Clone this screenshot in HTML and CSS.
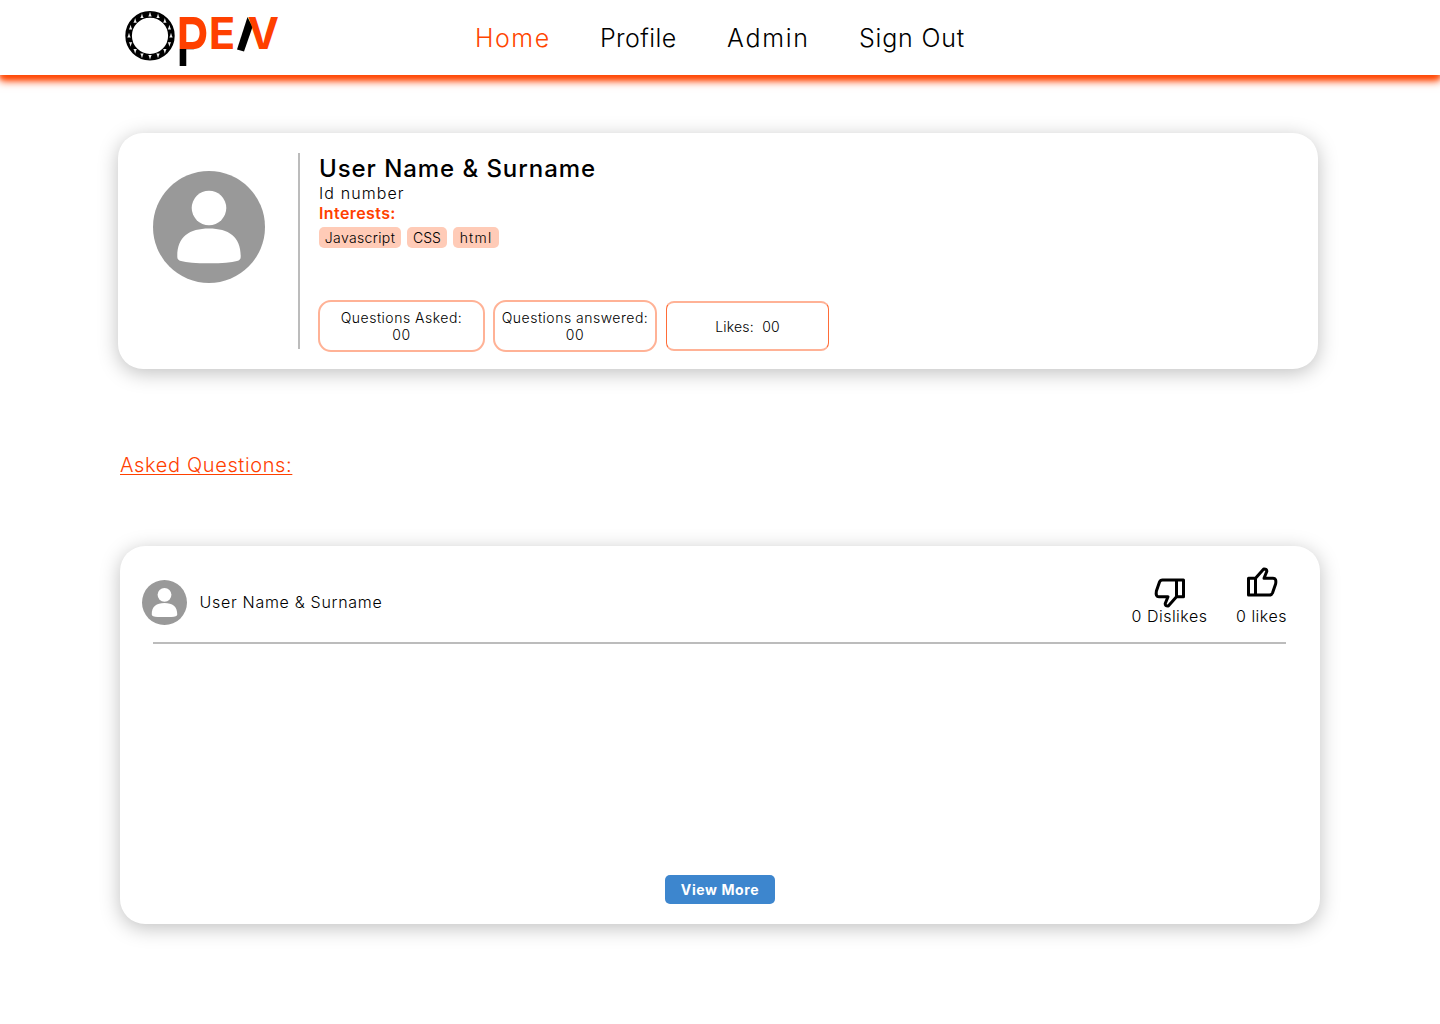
FILE: index.html
```html
<!DOCTYPE html>
<html lang="en">
<head>
<meta charset="utf-8">
<title>Open</title>
<link rel="stylesheet" href="styles.css">
</head>
<body>
<svg class="defs" aria-hidden="true">
  <symbol id="avatar" viewBox="0 0 112 112">
    <circle cx="56" cy="56" r="56" fill="#999"/>
    <circle cx="56" cy="37" r="17.3" fill="#fff"/>
    <path d="M24.3 86C24 66 36 57.5 56 57.5S88 66 87.7 86Q87.700 89 84 90Q76 92.300 56 92.300T28 90Q24.300 89 24.300 86Z" fill="#fff"/>
  </symbol>
</svg>
<header class="header">
  <svg class="logo" width="160" height="60" viewBox="120 8 160 60">
    <linearGradient id="p-fill" gradientUnits="userSpaceOnUse" x1="0" y1="8" x2="0" y2="68">
      <stop offset=".688" stop-color="#ff4000"/><stop offset=".688" stop-color="#000"/>
    </linearGradient>
    <circle cx="150" cy="35.800" r="21.400" fill="none" stroke="#000" stroke-width="6.600"/>
    <g id="ticks"></g>
    <text class="logo-p" x="176" y="65.500" textLength="32.500" lengthAdjust="spacingAndGlyphs">P</text>
    <text class="logo-type" x="208.800" y="49" textLength="26.500" lengthAdjust="spacingAndGlyphs">E</text>
    <path d="M247.500 17L252.500 27L244 51.500L237 49.500Z"/>
    <text class="logo-type" x="247.500" y="49" textLength="31.500" lengthAdjust="spacingAndGlyphs">V</text>
  </svg>
  <nav class="nav">
    <a class="nav-home">Home</a><a class="nav-profile">Profile</a><a class="nav-admin">Admin</a><a class="nav-out">Sign Out</a>
  </nav>
</header>
<main class="main">
  <section class="card profile">
    <svg class="avatar-lg"><use href="#avatar"/></svg>
    <div class="details">
      <h1 class="name">User Name &amp; Surname</h1>
      <p class="id">Id number</p>
      <p class="interests">Interests:</p>
      <div class="tags"><span class="tag tag-js">Javascript</span><span class="tag tag-css">CSS</span><span class="tag tag-html">html</span></div>
      <div class="stats">
        <div class="stat asked"><span>Questions Asked:</span><span>00</span></div>
        <div class="stat answered"><span>Questions answered:</span><span>00</span></div>
        <div class="stat likes"><span>Likes:&nbsp; 00</span></div>
      </div>
    </div>
  </section>
  <h2 class="heading">Asked Questions:</h2>
  <section class="card question">
    <div class="question-head">
      <svg class="avatar-sm" viewBox="0 0 112 112"><use href="#avatar"/></svg>
      <span class="author">User Name &amp; Surname</span>
      <div class="vote dislike">
        <svg width="32" height="30" viewBox="0 0 32 30"><path d="M22.500 2H8.500Q6.300 2 5.500 4L2.400 13Q1.300 18.800 5 18.800H14L11.200 25.600Q11 28.200 14.300 28L22.500 18.800ZM22.500 2H29.500V18.800H22.500Z"/></svg>
        <span>0 Dislikes</span>
      </div>
      <div class="vote like">
        <svg width="32" height="30" viewBox="0 0 32 30"><path d="M9.500 28H23.500Q25.700 28 26.500 26L29.600 17Q30.700 11.200 27 11.200H18L20.800 4.400Q21 1.800 17.700 2L9.500 11.200ZM9.500 28H2.500V11.200H9.500Z"/></svg>
        <span>0 likes</span>
      </div>
    </div>
    <button class="more">View More</button>
  </section>
</main>
<script src="logo.js"></script>
</body>
</html>
```
FILE: logo.js
```js
// Places the small white wedges around the logo ring; the lower ones point down.
const group = document.getElementById("ticks");
const count = 16;
for (let i = 0; i < count; i++) {
  const a = (i / count) * Math.PI * 2;
  const x = 150 + 21 * Math.sin(a);
  const y = 35.8 - 21 * Math.cos(a);
  const dir = Math.cos(a) < -0.1 ? -1 : 1;
  const p = document.createElementNS("http://www.w3.org/2000/svg", "path");
  p.setAttribute("d", "M0-3L.9 0L1.7 1.7H-1.7L-.9 0Z");
  p.setAttribute("fill", "#eee");
  p.setAttribute("transform", `translate(${x} ${y}) scale(1 ${dir})`);
  group.appendChild(p);
}
```
FILE: styles.css
```css
* { box-sizing: border-box; }
body { margin: 0; min-height: 100vh; background: #fff; color: #000; font-family: Inter, "Open Sans", sans-serif; }
h1, h2, p { margin: 0; font-weight: 400; }
.defs { display: none; }
.header { height: 75px; display: flex; align-items: flex-start; padding: 8px 0 0 120px; background: #fff; box-shadow: 0 4px 4px rgba(255, 69, 0, .6), 0 6px 8px #ff4500; }
.logo { display: block; flex: none; overflow: visible; }
.logo-type { font-family: Inter, sans-serif; font-weight: 700; font-size: 44px; fill: #ff4000; }
.logo-p { font-family: Inter, sans-serif; font-weight: 600; font-size: 66.700px; fill: url(#p-fill); }
.nav { display: flex; margin-left: 195px; height: 59px; align-items: center; font-size: 25px; font-weight: 300; white-space: nowrap; }
.nav a { flex: none; }
.nav-home { width: 125px; color: #ff4500; letter-spacing: 1.500px; }
.nav-profile { width: 127px; letter-spacing: .4px; }
.nav-admin { width: 132px; letter-spacing: 1.700px; }
.nav-out { letter-spacing: .8px; }
.main { padding: 58px 120px 100px 118px; }
.card { background: #fff; border-radius: 25px; box-shadow: 0 4px 20px rgba(0, 0, 0, .25); width: 1200px; }
.profile { height: 236px; display: flex; padding: 20px 0 20px 35px; }
.avatar-lg { width: 112px; height: 112px; margin: 18px 33px 0 0; flex: none; }
.details { border-left: 2px solid #bcbcbc; padding-left: 19px; }
.name { height: 30px; font-size: 24px; line-height: 32px; font-weight: 500; letter-spacing: .94px; white-space: nowrap; }
.id { font-size: 16px; line-height: 20px; font-weight: 300; letter-spacing: 1.100px; }
.interests { font-size: 16px; line-height: 20px; font-weight: 600; color: #ff4000; letter-spacing: .4px; }
.tags { display: flex; gap: 6px; margin-top: 4px; font-size: 14px; line-height: 22px; font-weight: 300; }
.tag { height: 21px; border-radius: 5px; background: #ffcbb7; text-align: center; white-space: nowrap; }
.tag-js { width: 82px; letter-spacing: .35px; }
.tag-css { width: 40px; }
.tag-html { width: 46px; letter-spacing: 1.200px; }
.stats { display: flex; align-items: center; margin-top: 52px; margin-left: -1px; font-size: 14px; line-height: 17px; font-weight: 300; letter-spacing: .5px; }
.stat { display: flex; flex-direction: column; align-items: center; justify-content: center; border: 2px solid #ffb296; border-radius: 13px; height: 52px; white-space: nowrap; }
.asked { width: 167px; margin-right: 8px; }
.answered { width: 164px; margin-right: 9px; }
.likes { width: 163px; height: 50px; border-radius: 8px; border-left: 1px solid #ff6d38; border-right: 1px solid #ff6d38; letter-spacing: .2px; }
.heading { margin: 84px 0 0 2px; font-size: 20px; line-height: 24px; font-weight: 300; letter-spacing: .63px; color: #ff4000; text-decoration: underline; text-decoration-thickness: 1px; text-underline-offset: 2px; }
.question { margin: 69px 0 0 2px; height: 378px; display: flex; flex-direction: column; align-items: center; justify-content: space-between; padding: 22px 34px 20px 33px; }
.question-head { width: 100%; height: 76px; display: flex; border-bottom: 2px solid #bcbcbc; font-size: 16px; font-weight: 300; line-height: 20px; white-space: nowrap; }
.avatar-sm { width: 45px; height: 45px; margin: 11.500px 13px 0 -11.500px; flex: none; }
.author { margin-top: 24px; letter-spacing: .7px; }
.vote { display: flex; flex-direction: column; align-items: center; letter-spacing: .5px; }
.vote path { fill: none; stroke: #000; stroke-width: 3; stroke-linejoin: round; }
.dislike { width: 77px; margin-left: auto; padding-top: 10px; }
.dislike span { margin-top: -2px; }
.like { width: 51px; margin: -1px -1px 0 28px; }
.like span { margin-top: 9px; }
.more { width: 110px; height: 29px; border: 0; border-radius: 5px; background: #3d86ce; color: #fff; font: 700 14px/29px Inter, sans-serif; letter-spacing: .6px; padding: 0 0 0 1px; }
```
